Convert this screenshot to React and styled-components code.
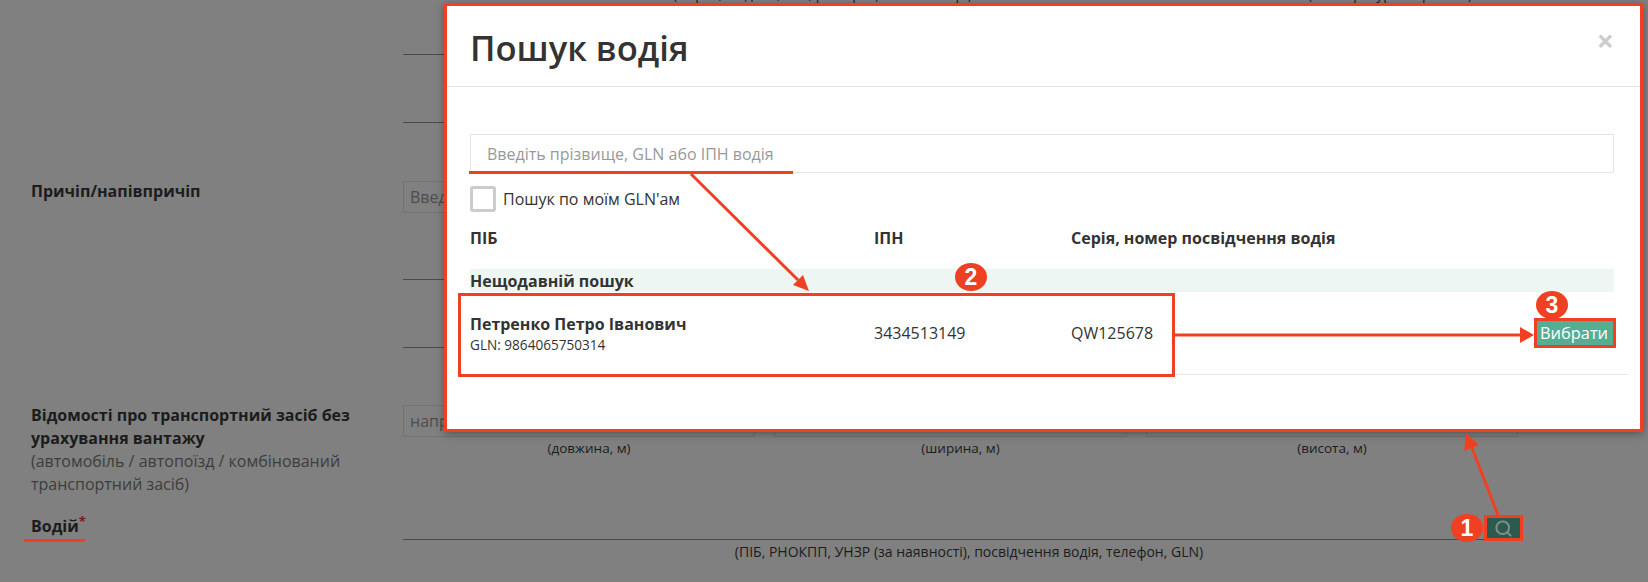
import React from 'react';
import styled, { createGlobalStyle } from 'styled-components';
import { Search } from 'lucide-react';

const GlobalStyle = createGlobalStyle`
  html, body {
    margin: 0;
    padding: 0;
    background: #808080;
    font-family: "Open Sans", "Noto Sans", sans-serif;
  }
`;

const RED = '#ef4023';

const Page = styled.div`
  position: relative;
  width: 1648px;
  height: 582px;
  overflow: hidden;
  background: #808080;
  color: #1c1c1c;
`;

const Form = styled.div`
  display: flex;
  flex-direction: column;
  margin-top: -15px;
  padding-left: 31px;
`;

const Row = styled.div`
  display: grid;
  grid-template-columns: 372px 1116px;
  height: ${(p) => p.$height}px;
`;

const RowLabel = styled.div`
  font-size: 16px;
  line-height: 23px;
  padding-top: ${(p) => p.$top || 0}px;
`;

const Strong = styled.div`
  font-weight: 700;
  color: #1c1c1c;
`;

const Hint = styled.div`
  color: #3d3d3d;
`;

const Req = styled.sup`
  color: #7b1a1a;
  font-size: 13px;
  line-height: 0;
  font-weight: 700;
`;

const Line = styled.div`
  height: ${(p) => p.$height}px;
  box-sizing: border-box;
  border-bottom: 1px solid #4a4a4a;
`;

const Columns = styled.div`
  display: grid;
  grid-template-columns: ${(p) => p.$cols};
  gap: 19px;
  padding-top: ${(p) => p.$top || 0}px;
`;

const Cell = styled.div`
  display: flex;
  flex-direction: column;
`;

const Caption = styled.div`
  font-size: ${(p) => p.$size || 14}px;
  line-height: 18px;
  text-align: center;
  color: #1c1c1c;
  margin-top: ${(p) => p.$top || 0}px;
  padding-left: ${(p) => p.$shift || 0}px;
`;

const GhostInput = styled.input`
  box-sizing: border-box;
  width: 100%;
  height: 32px;
  background: transparent;
  border: 1px solid #737373;
  padding: 0 6px;
  font: 16px "Open Sans", sans-serif;
  &::placeholder {
    color: #4d4d4d;
  }
`;

const DriverField = styled.div`
  box-sizing: border-box;
  height: 32px;
  display: flex;
  justify-content: flex-end;
  align-items: flex-end;
  border-bottom: 1px solid #4a4a4a;
`;

const SearchButton = styled.button`
  width: 33px;
  height: 20px;
  padding: 0;
  margin: 0 -1px 1px 0;
  border: none;
  outline: 3px solid ${RED};
  background: #2a5b4d;
  color: #7f8f8a;
  display: flex;
  align-items: center;
  justify-content: center;
`;

const Modal = styled.div`
  position: absolute;
  left: 444px;
  top: 3px;
  width: 1199px;
  height: 429px;
  box-sizing: border-box;
  background: #fff;
  border: 3px solid ${RED};
  color: #333;
  box-shadow: 0 2px 8px rgba(0, 0, 0, 0.35);
`;

const ModalHeader = styled.div`
  height: 81px;
  box-sizing: border-box;
  border-bottom: 1px solid #e5e5e5;
  display: flex;
  align-items: center;
  justify-content: space-between;
  padding: 3px 26px 0 23px;
`;

const Title = styled.h2`
  margin: 0;
  font-size: 34.6px;
  font-weight: 600;
  color: #333;
`;

const Close = styled.span`
  font-size: 30px;
  line-height: 1;
  font-weight: 700;
  color: #cccccc;
  margin-top: -13px;
`;

const ModalBody = styled.div`
  padding: 47px 0 0 23px;
`;

const SearchInput = styled.input`
  display: block;
  box-sizing: border-box;
  width: 1144px;
  height: 39px;
  border: 1px solid #e5e5e5;
  padding: 0 16px;
  font: 16px "Open Sans", sans-serif;
  color: #333;
  &::placeholder {
    color: #999;
    opacity: 1;
  }
`;

const CheckRow = styled.label`
  display: flex;
  align-items: center;
  gap: 7px;
  margin-top: 13px;
  font-size: 16px;
  line-height: 26px;
`;

const CheckBox = styled.span`
  box-sizing: border-box;
  width: 26px;
  height: 26px;
  border: 3px solid #ccc;
  border-radius: 3px;
`;

const TableRow = styled.div`
  display: grid;
  grid-template-columns: 404px 197px 1fr;
  align-items: center;
`;

const HeadRow = styled(TableRow)`
  margin-top: 14px;
  height: 24px;
  font-size: 16px;
  font-weight: 700;
`;

const Recent = styled.div`
  margin-top: 19px;
  width: 1144px;
  height: 23px;
  background: #eef6f3;
  font-size: 16px;
  line-height: 25px;
  font-weight: 700;
`;

const DataRow = styled(TableRow)`
  position: relative;
  width: 1158px;
  height: 83px;
  box-sizing: border-box;
  border-bottom: 1px solid #e8e8e8;
  font-size: 16px;
`;

const Name = styled.div`
  font-weight: 700;
  line-height: 24px;
`;

const Gln = styled.div`
  font-size: 13.6px;
  line-height: 18px;
`;

const PickButton = styled.button`
  position: absolute;
  right: 15px;
  top: 29px;
  width: 76px;
  height: 24px;
  padding: 0 2px 0 0;
  border: none;
  outline: 3px solid ${RED};
  background: #55ae93;
  color: #fff;
  font: 16.4px/24px "Open Sans", sans-serif;
`;

const Mark = styled.div`
  position: absolute;
  left: ${(p) => p.$left}px;
  top: ${(p) => p.$top}px;
  width: ${(p) => p.$width}px;
  height: ${(p) => p.$height}px;
  box-sizing: border-box;
  background: ${(p) => (p.$frame ? 'transparent' : RED)};
  border: ${(p) => (p.$frame ? `3px solid ${RED}` : 'none')};
`;

const Badge = styled.div`
  position: absolute;
  left: ${(p) => p.$x - 16}px;
  top: ${(p) => p.$y - 14}px;
  width: 32px;
  height: 28px;
  border-radius: 50%;
  background: ${RED};
  color: #fff;
  font: 700 23px/28px "Liberation Sans", Arial, sans-serif;
  text-align: center;
`;

const Arrows = styled.svg`
  position: absolute;
  left: 0;
  top: 0;
  pointer-events: none;
`;

export default function App() {
  return (
    <Page>
      <GlobalStyle />
      <Form>
        <Row $height={18}>
          <div />
          <Columns $cols="1fr 372px">
            <Caption $shift={114}>(марка, модель, тип, реєстраційний номер )</Caption>
            <Caption $shift={114}>(температурний режим)</Caption>
          </Columns>
        </Row>
        <Row $height={52}>
          <div />
          <Line $height={52} />
        </Row>
        <Row $height={68}>
          <div />
          <Line $height={68} />
        </Row>
        <Row $height={157}>
          <RowLabel $top={57}>
            <Strong>Причіп/напівпричіп</Strong>
          </RowLabel>
          <div>
            <Columns $cols="1fr" $top={58}>
              <GhostInput placeholder="Введіть" readOnly />
            </Columns>
            <Line $height={67} />
          </div>
        </Row>
        <Row $height={68}>
          <div />
          <Line $height={68} />
        </Row>
        <Row $height={160}>
          <RowLabel $top={56}>
            <Strong>Відомості про транспортний засіб без урахування вантажу</Strong>
            <Hint>(автомобіль / автопоїзд / комбінований транспортний засіб)</Hint>
          </RowLabel>
          <Columns $cols="352px 353px 372px" $top={57}>
            <Cell>
              <GhostInput placeholder="наприклад" readOnly />
              <Caption $top={2} $size={13.5} $shift={20}>(довжина, м)</Caption>
            </Cell>
            <Cell>
              <GhostInput readOnly />
              <Caption $top={2} $size={13.5} $shift={20}>(ширина, м)</Caption>
            </Cell>
            <Cell>
              <GhostInput readOnly />
              <Caption $top={2} $size={13.5}>(висота, м)</Caption>
            </Cell>
          </Columns>
        </Row>
        <Row $height={60}>
          <RowLabel $top={7}>
            <Strong>
              Водій<Req>*</Req>
            </Strong>
          </RowLabel>
          <Cell>
            <DriverField>
              <SearchButton>
                <Search size={19} strokeWidth={2.5} />
              </SearchButton>
            </DriverField>
            <Caption $top={3} $shift={16}>(ПІБ, РНОКПП, УНЗР (за наявності), посвідчення водія, телефон, GLN)</Caption>
          </Cell>
        </Row>
      </Form>

      <Modal>
        <ModalHeader>
          <Title>Пошук водія</Title>
          <Close>×</Close>
        </ModalHeader>
        <ModalBody>
          <SearchInput placeholder="Введіть прізвище, GLN або ІПН водія" readOnly />
          <CheckRow>
            <CheckBox />
            Пошук по моїм GLN'ам
          </CheckRow>
          <HeadRow>
            <span>ПІБ</span>
            <span>ІПН</span>
            <span>Серія, номер посвідчення водія</span>
          </HeadRow>
          <Recent>Нещодавній пошук</Recent>
          <DataRow>
            <div>
              <Name>Петренко Петро Іванович</Name>
              <Gln>GLN: 9864065750314</Gln>
            </div>
            <span>3434513149</span>
            <span>QW125678</span>
            <PickButton>Вибрати</PickButton>
          </DataRow>
        </ModalBody>
      </Modal>

      <Mark $left={24} $top={539} $width={61} $height={3} />
      <Mark $left={469} $top={171} $width={324} $height={3} />
      <Mark $frame $left={458} $top={293} $width={717} $height={84} />

      <Arrows width="1648" height="582" viewBox="0 0 1648 582">
        <g stroke={RED} strokeWidth="3" fill="none">
          <line x1="691" y1="174" x2="798" y2="280" />
          <line x1="1175" y1="335" x2="1522" y2="335" />
          <line x1="1498" y1="515" x2="1472" y2="448" />
        </g>
        <g fill={RED}>
          <polygon points="809,291 793,285 803,275" />
          <polygon points="1534,335 1520,327 1520,343" />
          <polygon points="1466,433 1479,445 1464,451" />
        </g>
      </Arrows>

      <Badge $x={1467} $y={528}>1</Badge>
      <Badge $x={971} $y={277}>2</Badge>
      <Badge $x={1552} $y={305}>3</Badge>
    </Page>
  );
}
